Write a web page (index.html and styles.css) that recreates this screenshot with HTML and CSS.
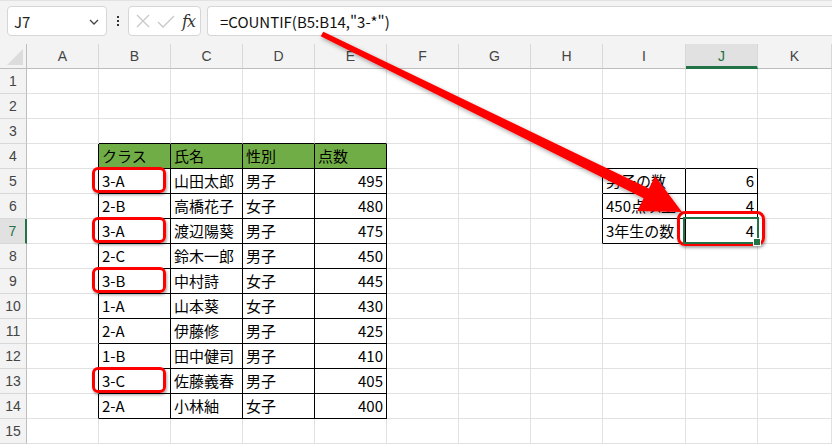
FILE: index.html
```html
<!DOCTYPE html>
<html lang="ja">
<head>
    <meta charset="UTF-8">
    <title>COUNTIF</title>
    <link rel="stylesheet" href="styles.css">
</head>
<body>
    <!-- Formula bar -->
    <div class="topbar">
        <div class="namebox">
            <span>J7</span>
            <svg class="chev" width="12" height="8" viewBox="0 0 12 8"><path d="M2 2 L6 6 L10 2" fill="none" stroke="#444" stroke-width="1.3"/></svg>
        </div>
        <div class="dots"><i></i><i></i><i></i></div>
        <div class="fxbox">
            <svg width="20" height="20" viewBox="0 0 20 20"><path d="M4 4 L16 16 M16 4 L4 16" stroke="#c8c8c8" stroke-width="1.3" fill="none"/></svg>
            <svg width="22" height="20" viewBox="0 0 22 20"><path d="M3 11 L8 16 L19 5" stroke="#c8c8c8" stroke-width="1.3" fill="none"/></svg>
            <span class="fx">fx</span>
        </div>
        <div class="formula">=COUNTIF(B5:B14,"3-*")</div>
    </div>

    <!-- Sheet -->
    <div class="sheet">
        <div class="ch corner"></div><div class="ch">A</div><div class="ch">B</div><div class="ch">C</div><div class="ch">D</div><div class="ch">E</div><div class="ch">F</div><div class="ch">G</div><div class="ch">H</div><div class="ch">I</div><div class="ch sel">J</div><div class="ch">K</div>

        <div class="rh">1</div><div></div><div></div><div></div><div></div><div></div><div></div><div></div><div></div><div></div><div></div><div></div>
        <div class="rh">2</div><div></div><div></div><div></div><div></div><div></div><div></div><div></div><div></div><div></div><div></div><div></div>
        <div class="rh">3</div><div></div><div class="ab"></div><div class="ab"></div><div class="ab"></div><div class="ab"></div><div></div><div></div><div></div><div></div><div></div><div></div>
        <div class="rh">4</div><div class="lb"></div><div class="t hd">クラス</div><div class="t hd">氏名</div><div class="t hd">性別</div><div class="t hd">点数</div><div></div><div></div><div></div><div class="ab"></div><div class="ab"></div><div></div>
        <div class="rh">5</div><div class="lb"></div><div class="t mark">3-A</div><div class="t">山田太郎</div><div class="t">男子</div><div class="t num">495</div><div></div><div></div><div class="lb"></div><div class="t">男子の数</div><div class="t num">6</div><div></div>
        <div class="rh">6</div><div class="lb"></div><div class="t">2-B</div><div class="t">高橋花子</div><div class="t">女子</div><div class="t num">480</div><div></div><div></div><div class="lb"></div><div class="t">450点以上</div><div class="t num">4</div><div></div>
        <div class="rh cur">7</div><div class="lb"></div><div class="t mark">3-A</div><div class="t">渡辺陽葵</div><div class="t">男子</div><div class="t num">475</div><div></div><div></div><div class="lb"></div><div class="t">3年生の数</div><div class="t num active">4<span class="handle"></span></div><div></div>
        <div class="rh">8</div><div class="lb"></div><div class="t">2-C</div><div class="t">鈴木一郎</div><div class="t">男子</div><div class="t num">450</div><div></div><div></div><div></div><div></div><div></div><div></div>
        <div class="rh">9</div><div class="lb"></div><div class="t mark">3-B</div><div class="t">中村詩</div><div class="t">女子</div><div class="t num">445</div><div></div><div></div><div></div><div></div><div></div><div></div>
        <div class="rh">10</div><div class="lb"></div><div class="t">1-A</div><div class="t">山本葵</div><div class="t">女子</div><div class="t num">430</div><div></div><div></div><div></div><div></div><div></div><div></div>
        <div class="rh">11</div><div class="lb"></div><div class="t">2-A</div><div class="t">伊藤修</div><div class="t">男子</div><div class="t num">425</div><div></div><div></div><div></div><div></div><div></div><div></div>
        <div class="rh">12</div><div class="lb"></div><div class="t">1-B</div><div class="t">田中健司</div><div class="t">男子</div><div class="t num">410</div><div></div><div></div><div></div><div></div><div></div><div></div>
        <div class="rh">13</div><div class="lb"></div><div class="t mark">3-C</div><div class="t">佐藤義春</div><div class="t">男子</div><div class="t num">405</div><div></div><div></div><div></div><div></div><div></div><div></div>
        <div class="rh">14</div><div class="lb"></div><div class="t">2-A</div><div class="t">小林紬</div><div class="t">女子</div><div class="t num">400</div><div></div><div></div><div></div><div></div><div></div><div></div>
        <div class="rh">15</div><div></div><div></div><div></div><div></div><div></div><div></div><div></div><div></div><div></div><div></div><div></div>
    </div>

    <!-- Callout arrow -->
    <svg class="arrow" width="832" height="445" viewBox="0 0 832 445">
        <defs>
            <filter id="sh" x="-10%" y="-10%" width="120%" height="130%">
                <feDropShadow dx="1" dy="2" stdDeviation="2" flood-color="#000" flood-opacity="0.35"/>
            </filter>
        </defs>
        <polygon filter="url(#sh)" fill="#ff0000"
            points="323.3,31.7 648.9,188.5 655.1,175.9 682,212 637.3,210.9 643.6,198.3 320.7,36.3"/>
    </svg>
</body>
</html>
```

FILE: styles.css
```css
/* General */
body {
    margin: 0;
    padding: 0;
    background: #fff;
    font-family: "Noto Sans CJK JP", "Noto Sans", sans-serif;
    color: #000;
    position: relative;
    width: 832px;
    height: 445px;
    overflow: hidden;
}

/* Formula bar */
.topbar {
    height: 44px;
    box-sizing: border-box;
    background: #f3f3f3;
    border-top: 1px solid #e2e2e2;
    display: flex;
    align-items: flex-start;
    padding: 5px 0 0 7px;
}

.namebox,
.fxbox,
.formula {
    height: 30px;
    box-sizing: border-box;
    background: #fff;
    border: 1px solid #d6d6d6;
    border-radius: 4px;
    display: flex;
    align-items: center;
}

.namebox {
    width: 100px;
    padding: 0 6px 0 6px;
    justify-content: space-between;
    font-size: 15px;
    color: #222;
}

.chev {
    margin-top: 2px;
}

.dots {
    width: 21px;
    height: 30px;
    display: flex;
    flex-direction: column;
    align-items: center;
    justify-content: center;
    gap: 2px;
}

.dots i {
    width: 2px;
    height: 2px;
    background: #333;
}

.fxbox {
    width: 73px;
    padding: 0 2px 0 4px;
    gap: 2px;
}

.fx {
    font-family: "DejaVu Serif", "Liberation Serif", serif;
    font-style: italic;
    font-size: 16px;
    color: #333;
    margin-left: 3px;
    letter-spacing: -1px;
}

.formula {
    flex: 1;
    margin-left: 6px;
    border-right: none;
    border-radius: 4px 0 0 4px;
    padding-left: 12px;
    font-size: 15px;
    color: #111;
}

/* Sheet grid */
.sheet {
    display: grid;
    grid-template-columns: 27px repeat(8, 72px) 83px 72px 74px;
    grid-auto-rows: 25px;
    font-size: 15px;
    line-height: 24px;
}

.sheet > div {
    box-sizing: border-box;
    border-right: 1px solid #e1e1e1;
    border-bottom: 1px solid #e1e1e1;
    padding: 0 3px;
    white-space: nowrap;
    position: relative;
}

.sheet > .ch {
    background: #f3f3f3;
    border-right: 1px solid #d8d8d8;
    border-bottom: 1px solid #bdbdbd;
    text-align: center;
    color: #444;
    font-size: 14px;
    font-family: "Liberation Sans", Arial, sans-serif;
}

.sheet > .corner {
    border-right: 1px solid #bdbdbd;
}

.corner::after {
    content: "";
    position: absolute;
    right: 3px;
    bottom: 3px;
    border-left: 16px solid transparent;
    border-bottom: 16px solid #dcdcdc;
}

.sheet > .ch.sel {
    background: #e1e1e1;
    border-bottom: 3px solid #217346;
    color: #217346;
}

.sheet > .rh {
    background: #f3f3f3;
    border-right: 1px solid #bdbdbd;
    border-bottom: 1px solid #d8d8d8;
    text-align: center;
    color: #444;
    font-size: 14px;
    padding: 0;
    font-family: "Liberation Sans", Arial, sans-serif;
}

.sheet > .rh.cur {
    background: #e1e1e1;
    border-right: 2px solid #217346;
    color: #217346;
}

/* Bordered tables */
.sheet > .t {
    border-right: 1px solid #000;
    border-bottom: 1px solid #000;
}

.sheet > .lb {
    border-right: 1px solid #000;
}

.sheet > .ab {
    border-bottom: 1px solid #000;
}

.sheet > .hd {
    background: #70ad47;
}

.sheet > .num {
    text-align: right;
}

/* Red callouts */
.mark::before,
.active::before {
    content: "";
    position: absolute;
    border: 3px solid #ff0000;
    box-shadow: 1px 2px 3px rgba(0, 0, 0, 0.35);
}

.mark::before {
    left: -7px;
    right: 4px;
    top: -2px;
    bottom: 0;
    border-radius: 6px;
}

.active::before {
    left: -9px;
    right: -8px;
    top: -8px;
    bottom: -3px;
    border-radius: 8px;
}

/* Selected cell */
.sheet > .active {
    z-index: 1;
}

.active::after {
    content: "";
    position: absolute;
    left: -3px;
    right: -2px;
    top: -2px;
    bottom: -1px;
    border: 2px solid #217346;
}

.handle {
    position: absolute;
    right: -4px;
    bottom: -3px;
    width: 6px;
    height: 6px;
    background: #217346;
    border: 1px solid #fff;
    z-index: 2;
}

/* Arrow overlay */
.arrow {
    position: absolute;
    left: 0;
    top: 0;
    pointer-events: none;
    z-index: 5;
}
```
